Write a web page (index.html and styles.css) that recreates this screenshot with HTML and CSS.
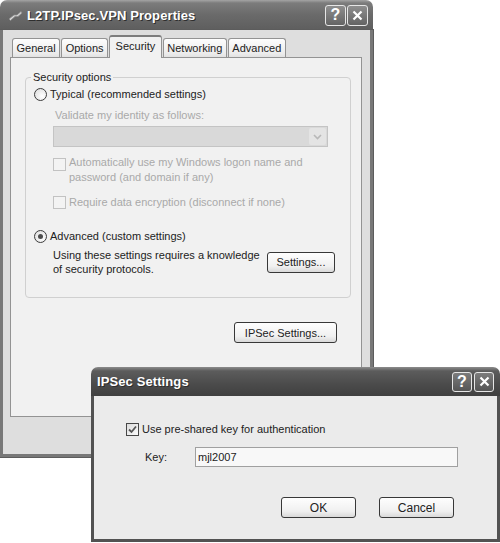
FILE: index.html
```html
<!DOCTYPE html>
<html lang="en">
<head>
    <meta charset="UTF-8">
    <meta name="viewport" content="width=device-width, initial-scale=1.0">
    <title>L2TP.IPsec.VPN Properties</title>
    <link rel="stylesheet" href="styles.css">
</head>
<body>
    <!-- Main properties window -->
    <div class="window main-window">
        <div class="titlebar">
            <svg class="title-icon" width="15" height="11" viewBox="0 0 15 11">
                <path d="M1 9 L6 5 L9 5 L13 1.5 L14 3 L10 6.5 L7 6.5 L2.5 10.5 Z" fill="#d8d8d8" stroke="#8a8a8a" stroke-width="0.8"/>
            </svg>
            <span class="title">L2TP.IPsec.VPN Properties</span>
            <div class="caption-buttons">
                <span class="cap-btn">?</span>
                <span class="cap-btn">
                    <svg width="11" height="11" viewBox="0 0 11 11"><path d="M1.5 1.5 L9.5 9.5 M9.5 1.5 L1.5 9.5" stroke="#fff" stroke-width="2.2"/></svg>
                </span>
            </div>
        </div>
        <div class="window-body">
            <div class="tabs">
                <span class="tab">General</span>
                <span class="tab">Options</span>
                <span class="tab active">Security</span>
                <span class="tab">Networking</span>
                <span class="tab">Advanced</span>
            </div>
            <div class="tab-panel">
                <fieldset class="group">
                    <legend>Security options</legend>

                    <div class="radio-row">
                        <span class="radio"></span>
                        <span>Typical (recommended settings)</span>
                    </div>

                    <div class="indent">
                        <div class="disabled-text validate">Validate my identity as follows:</div>
                        <div class="combo">
                            <span class="combo-btn">
                                <svg width="9" height="6" viewBox="0 0 9 6"><path d="M1 1 L4.5 4.5 L8 1" fill="none" stroke="#b8b8b8" stroke-width="1.6"/></svg>
                            </span>
                        </div>
                        <div class="check-row disabled auto-logon">
                            <span class="checkbox"></span>
                            <span>Automatically use my Windows logon name and<br>password (and domain if any)</span>
                        </div>
                        <div class="check-row disabled encrypt">
                            <span class="checkbox"></span>
                            <span>Require data encryption (disconnect if none)</span>
                        </div>
                    </div>

                    <div class="radio-row advanced">
                        <span class="radio checked"></span>
                        <span>Advanced (custom settings)</span>
                    </div>

                    <div class="indent advanced-row">
                        <p>Using these settings requires a knowledge of security protocols.</p>
                        <button class="btn btn-settings">Settings...</button>
                    </div>
                </fieldset>

                <div class="panel-footer">
                    <button class="btn btn-ipsec">IPSec Settings...</button>
                </div>
            </div>
        </div>
    </div>

    <!-- IPSec Settings dialog -->
    <div class="window dialog">
        <div class="titlebar">
            <span class="title">IPSec Settings</span>
            <div class="caption-buttons">
                <span class="cap-btn">?</span>
                <span class="cap-btn">
                    <svg width="11" height="11" viewBox="0 0 11 11"><path d="M1.5 1.5 L9.5 9.5 M9.5 1.5 L1.5 9.5" stroke="#fff" stroke-width="2.2"/></svg>
                </span>
            </div>
        </div>
        <div class="window-body dialog-body">
            <div class="check-row">
                <span class="checkbox">
                    <svg width="11" height="11" viewBox="0 0 11 11"><path d="M2 5.5 L4.5 8 L9 2.5" fill="none" stroke="#555" stroke-width="1.8"/></svg>
                </span>
                <span>Use pre-shared key for authentication</span>
            </div>
            <div class="key-row">
                <span class="key-label">Key:</span>
                <div class="text-input">mjl2007</div>
            </div>
            <div class="dialog-buttons">
                <button class="btn btn-dialog">OK</button>
                <button class="btn btn-dialog">Cancel</button>
            </div>
        </div>
    </div>
</body>
</html>
```

FILE: styles.css
```css
* {
    margin: 0;
    padding: 0;
    box-sizing: border-box;
}

body {
    width: 500px;
    height: 543px;
    overflow: hidden;
    position: relative;
    background: #fff;
    font-family: 'Liberation Sans', Arial, sans-serif;
    font-size: 11px;
    color: #222;
}

/* Windows */

.window {
    position: absolute;
    display: flex;
    flex-direction: column;
}

.main-window {
    left: 0;
    top: 0;
    width: 373px;
    height: 457px;
}

.dialog {
    left: 91px;
    top: 367px;
    width: 409px;
    height: 175px;
}

.titlebar {
    height: 30px;
    display: flex;
    align-items: center;
    padding: 0 5px 0 8px;
    border-radius: 7px 7px 0 0;
    background: linear-gradient(#a4a4a4 0, #7c7c7c 3px, #6a6a6a 50%, #5e5e5e 100%);
    color: #fff;
    flex-shrink: 0;
}

.dialog .titlebar {
    height: 29px;
    padding: 0 6px 0 6px;
    background: linear-gradient(#8c8c8c 0, #5c5c5c 4px, #4b4b4b 60%, #404040 100%);
}

.title-icon {
    margin-right: 4px;
}

.title {
    font-size: 13px;
    font-weight: bold;
    text-shadow: 1px 1px 0 #2e2e2e;
    letter-spacing: 0.1px;
}

.caption-buttons {
    margin-left: auto;
    display: flex;
    gap: 1px;
}

.dialog .caption-buttons {
    gap: 2px;
}

.cap-btn {
    width: 21px;
    height: 21px;
    display: flex;
    align-items: center;
    justify-content: center;
    border: 1px solid #e6e6e6;
    border-radius: 3px;
    background: linear-gradient(#8e8e8e, #646464);
    font-weight: bold;
    font-size: 16px;
    color: #fff;
}

.dialog .cap-btn {
    width: 20px;
    height: 20px;
    background: linear-gradient(#7c7c7c, #555);
}

.window-body {
    flex: 1;
    background: #dedede;
    border: 3px solid #787878;
    border-top: 0;
    box-shadow: 0 0 0 1px #5c5c5c;
}

/* Tabs */

.tabs {
    height: 27px;
    display: flex;
    align-items: flex-end;
    gap: 1px;
    padding-left: 9px;
}

.tab {
    height: 19px;
    padding: 0 3.5px;
    display: flex;
    align-items: center;
    border: 1px solid #939393;
    border-bottom: 0;
    border-radius: 3px 3px 0 0;
    background: linear-gradient(#fdfdfd, #ececec 80%, #e2e2e2);
}

.tab.active {
    height: 23px;
    margin-bottom: -1px;
    padding: 0 5.5px 3px;
    position: relative;
    z-index: 1;
    background: #f1f1f1;
    border-top: 2px solid #7d7d7d;
}

.tab-panel {
    height: 360px;
    margin: 0 8px 0 7px;
    padding: 12px 10px 0 14px;
    border: 1px solid #939393;
    background: #f1f1f1;
}

/* Group box */

.group {
    border: 1px solid #d0d0d0;
    border-radius: 4px;
    padding: 3px 15px 21px 8px;
}

.group legend {
    padding: 0 2px;
    margin-left: -3px;
    line-height: 14px;
}

.radio-row {
    height: 14px;
    display: flex;
    align-items: center;
    gap: 3px;
}

.radio-row.advanced {
    margin-top: 19px;
}

.radio {
    width: 13px;
    height: 13px;
    border: 1px solid #3c3c3c;
    border-radius: 50%;
    background: radial-gradient(circle at 65% 65%, #fff, #dadada);
    display: flex;
    align-items: center;
    justify-content: center;
}

.radio.checked::after {
    content: '';
    width: 5px;
    height: 5px;
    border-radius: 50%;
    background: #4c4c4c;
}

.indent {
    margin-left: 19px;
}

.disabled-text,
.check-row.disabled {
    color: #a9a9a9;
}

.validate {
    margin-top: 7px;
    padding-left: 2px;
    line-height: 14px;
}

.combo {
    margin-top: 4px;
    width: 275px;
    height: 21px;
    border: 1px solid #c4c4c4;
    background: #d9d9d9;
    display: flex;
    justify-content: flex-end;
    padding: 1px;
}

.combo-btn {
    width: 17px;
    display: flex;
    align-items: center;
    justify-content: center;
    background: #e4e4e4;
    border-radius: 2px;
}

.check-row {
    display: flex;
    align-items: flex-start;
    gap: 3px;
    line-height: 15px;
}

.check-row.auto-logon {
    margin-top: 8px;
}

.check-row.encrypt {
    margin-top: 10px;
}

.checkbox {
    width: 13px;
    height: 13px;
    margin-top: 1px;
    flex-shrink: 0;
    border: 1px solid #474747;
    background: linear-gradient(135deg, #dcdcdc, #fbfbfb);
    display: flex;
    align-items: center;
    justify-content: center;
}

.check-row.disabled .checkbox {
    border-color: #c2c2c2;
    background: #f3f3f3;
}

.auto-logon .checkbox {
    margin-top: 3px;
}

.advanced-row {
    margin-top: 5px;
    display: flex;
    align-items: center;
    justify-content: space-between;
}

.advanced-row p {
    width: 212px;
    line-height: 14px;
}

/* Buttons */

.btn {
    height: 21px;
    font-family: inherit;
    font-size: 11px;
    color: #222;
    border: 1px solid #383838;
    border-radius: 3px;
    background: linear-gradient(#fefefe, #f0f0f0 70%, #d9d9d9);
}

.btn-settings {
    width: 68px;
}

.panel-footer {
    margin-top: 24px;
    display: flex;
    justify-content: flex-end;
    padding-right: 14px;
}

.btn-ipsec {
    width: 103px;
}

/* Dialog content */

.dialog-body {
    background: #ebebeb;
    border-color: #525252;
    box-shadow: none;
    padding: 26px 39px 0 32px;
}

.key-row {
    margin-top: 10px;
    display: flex;
    align-items: center;
    padding-left: 19px;
}

.key-label {
    width: 50px;
}

.text-input {
    flex: 1;
    height: 20px;
    line-height: 18px;
    padding-left: 2px;
    border: 1px solid #a0a0a0;
    background: #f8f8f8;
}

.dialog-buttons {
    margin-top: 30px;
    display: flex;
    justify-content: flex-end;
    gap: 23px;
    padding-right: 4px;
}

.btn-dialog {
    width: 75px;
    font-size: 12px;
}
```
